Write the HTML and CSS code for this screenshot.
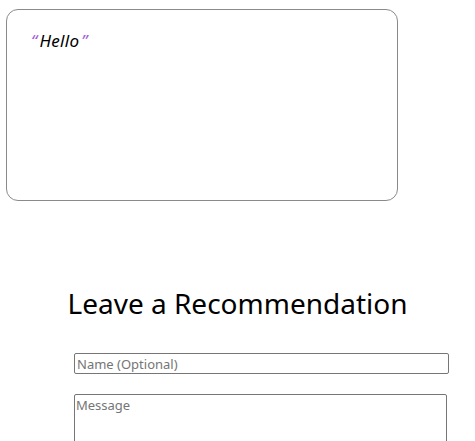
FILE: index.html
```html
<!DOCTYPE html>
<html lang="en">
<head>
<meta charset="utf-8">
<title>Recommendations</title>
<link rel="stylesheet" href="styles.css">
</head>
<body>
<main class="page">
  <section class="card">
    <p class="quote"><span class="mark open">“</span>Hello<span class="mark close">”</span></p>
  </section>
  <section class="form-section">
    <h2 class="title">Leave a Recommendation</h2>
    <form class="form">
      <input class="field" type="text" placeholder="Name (Optional)">
      <textarea class="area" placeholder="Message"></textarea>
    </form>
  </section>
</main>
</body>
</html>
```
FILE: styles.css
```css
html, body {
  margin: 0;
  padding: 0;
  background: #ffffff;
}
body {
  font-family: "Noto Sans", "DejaVu Sans", sans-serif;
  color: #000000;
}
.page {
  display: flex;
  flex-direction: column;
  height: 100vh;
  overflow: hidden;
}
.card {
  box-sizing: border-box;
  flex: none;
  margin: 9px 0 0 6px;
  width: 392px;
  height: 192px;
  border: 1px solid #8a8a8a;
  border-radius: 12px;
  padding: 20px 0 0 24px;
}
.quote {
  margin: 0;
  font-size: 17px;
  line-height: 22px;
  font-style: italic;
  letter-spacing: 0.3px;
}
.mark {
  color: #a45ee0;
}
.open {
  margin-right: 2px;
}
.close {
  margin-left: 2px;
}
.form-section {
  display: flex;
  flex-direction: column;
  align-items: center;
}
.title {
  margin: 85px 0 0;
  font-size: 28px;
  line-height: 34px;
  font-weight: 400;
}
.form {
  align-self: stretch;
  display: flex;
  flex-direction: column;
  align-items: flex-start;
  gap: 20px;
  margin: 33px 0 0 74px;
}
.field, .area {
  box-sizing: border-box;
  font-family: "Noto Sans", "DejaVu Sans", sans-serif;
  font-size: 13px;
  border: 1px solid #767676;
  border-radius: 2px;
  margin: 0;
  background: #fff;
  outline: none;
}
.field {
  width: 375px;
  height: 21px;
  padding: 0 2px;
  line-height: 19px;
}
.area {
  width: 373px;
  height: 100px;
  padding: 1px 1px;
  line-height: 18px;
  resize: vertical;
}
.field::placeholder, .area::placeholder {
  color: #757575;
  opacity: 1;
}
```
